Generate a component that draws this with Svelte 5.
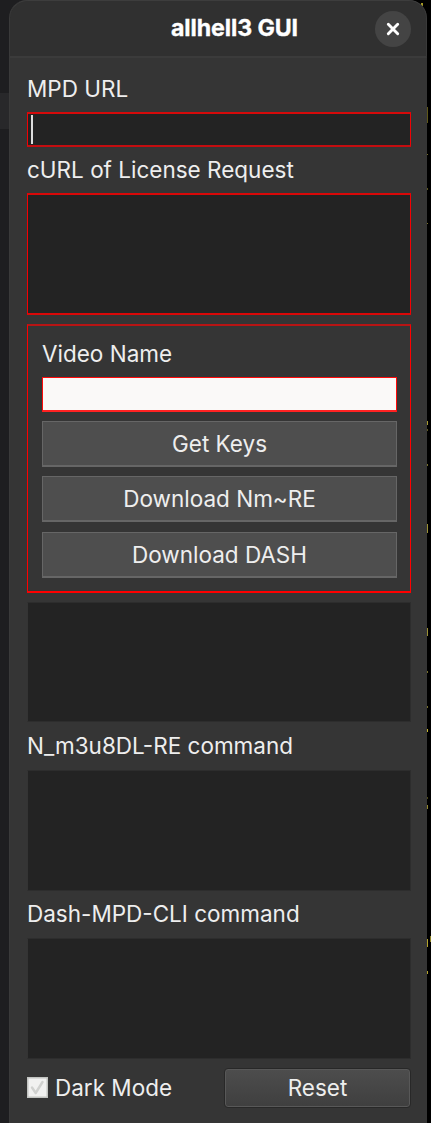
<script>
  let mpdUrl = $state('');
  const actions = ['Get Keys', 'Download Nm~RE', 'Download DASH'];
  const specks = [
    { y: 107, h: 16, w: 1, c: '#5f5719' },
    { y: 154, h: 1, w: 1, c: '#77702b' },
    { y: 188, h: 2, w: 1, c: '#5c571f' },
    { y: 223, h: 1, w: 1, c: '#77702b' },
    { y: 421, h: 4, w: 1, c: '#a89b32' },
    { y: 429, h: 2, w: 1, c: '#5c571f' },
    { y: 464, h: 2, w: 1, c: '#77702b' },
    { y: 524, h: 9, w: 1, c: '#9c9135' },
    { y: 628, h: 8, w: 1, c: '#9c9135' },
    { y: 671, h: 2, w: 1, c: '#77702b' },
    { y: 706, h: 2, w: 1, c: '#77702b' },
    { y: 729, h: 3, w: 1, c: '#c7b62c' },
    { y: 797, h: 2, w: 1, c: '#4c4819' },
    { y: 805, h: 4, w: 1, c: '#93882f' },
    { y: 939, h: 8, w: 1, c: '#b5a42c' },
    { y: 971, h: 3, w: 1, c: '#b5a42c' }
  ];
</script>

<div class="desktop">
  <div class="behind"></div>
  {#each specks as s}
    <i class="speck" style="top:{s.y}px;height:{s.h}px;width:{s.w}px;background:{s.c}"></i>
  {/each}
  <i class="speck corner"></i>
  <i class="speck edge"></i>
  <main class="window">
    <header>
      <h1>allhell3 GUI</h1>
      <button class="close" aria-label="Close">
        <svg width="14" height="14" viewBox="0 0 14 14"><path d="M2.3 2.3 11.7 11.7M11.7 2.3 2.3 11.7" stroke="#fff" stroke-width="2.9" stroke-linecap="round" /></svg>
      </button>
    </header>
    <div class="content">
      <div class="label first"><span>MPD URL</span></div>
      <div class="field invalid"><i class="caret"></i>{mpdUrl}</div>
      <div class="label second"><span>cURL of License Request</span></div>
      <div class="area invalid tall"></div>
      <section class="group">
        <div class="label name"><span>Video Name</span></div>
        <div class="field light"></div>
        <div class="actions">
          {#each actions as action}
            <button class="action"><span>{action}</span></button>
          {/each}
        </div>
      </section>
      <div class="area output"></div>
      <div class="label cmd"><span>N_m3u8DL-RE command</span></div>
      <div class="area"></div>
      <div class="label cmd"><span>Dash-MPD-CLI command</span></div>
      <div class="area"></div>
      <footer>
        <label class="check">
          <svg width="21" height="21" viewBox="0 0 21 21">
            <rect x=".75" y=".75" width="19.5" height="19.5" fill="#f1f1f0" stroke="#c2c4c1" stroke-width="1.5" />
            <path d="M5 10.5 8.7 16 15.5 5" fill="none" stroke="#d0d1cf" stroke-width="2.4" stroke-linecap="round" stroke-linejoin="round" />
          </svg>
          <span>Dark Mode</span>
        </label>
        <button class="reset"><span>Reset</span></button>
      </footer>
    </div>
  </main>
</div>

<style>
  :global(body) { background: #000; overflow: hidden; }
  * { box-sizing: border-box; }
  .desktop {
    position: relative;
    width: 431px;
    height: 1123px;
    padding-left: 9px;
    overflow: hidden;
    background: linear-gradient(90deg, #1e1e20 40px, #000 40px);
    font-family: Inter, sans-serif;
    font-size: 22.5px;
    color: #eee;
  }
  .behind { position: absolute; left: 0; top: 93px; width: 9px; height: 36px; background: #28282a; }
  .speck { position: absolute; left: 427px; z-index: 2; }
  .corner { left: 421px; top: 3px; width: 2px; height: 3px; background: #a59925; z-index: 0; }
  .edge { left: 430px; top: 936px; width: 1px; height: 6px; background: #8c8228; }
  .window {
    position: relative;
    width: 418px;
    height: 1123px;
    border-radius: 18px 18px 0 0;
    background: #353535;
    border-left: 1px solid #3a3a3a;
    overflow: hidden;
  }
  header {
    display: grid;
    grid-template-columns: 52px 1fr 53px;
    align-items: center;
    height: 58px;
    background: #303030;
    border-top: 1px solid #3d3d3d;
    border-right: 1px solid #393939;
    border-bottom: 2px solid #3b3b3b;
    border-radius: 18px 18px 0 0;
  }
  h1 {
    grid-column: 2;
    margin: -2px 0 0;
    padding-left: 34px;
    text-align: center;
    font-size: 23.2px;
    font-weight: 700;
    line-height: 28px;
    color: #fff;
    white-space: nowrap;
    letter-spacing: -0.1px;
    -webkit-text-stroke: 0.35px #fff;
  }
  button { font: inherit; color: inherit; padding: 0; }
  .close {
    display: grid;
    place-items: center;
    justify-self: start;
    width: 36px;
    height: 36px;
    border: 0;
    border-radius: 50%;
    background: #444;
    margin: 0 0 0 2px;
  }
  .content { padding: 16px 16px 0 17px; }
  .label { display: flex; align-items: center; white-space: nowrap; line-height: 28px; }
  .first { height: 38px; padding-bottom: 8px; }
  .second { height: 46px; }
  .field { height: 35px; background: #232323; padding: 2px 3px; border: 1px solid #f00; }
  .field.invalid { border-color: #f00205; border-top: 2px solid #d60a0a; border-bottom: 2px solid #c40d10; width: 384px; padding-top: 1px; }
  .caret { display: block; width: 2px; height: 29px; background: #ddd; }
  .area { width: 384px; height: 121px; background: #232323; border: 1px solid #2d2d2d; border-left-color: #343434; }
  .tall { height: 122px; border: 1px solid #f50003; border-top: 2px solid #d90808; border-bottom: 2px solid #d90808; }
  .group {
    width: 384px;
    height: 269px;
    margin-top: 9px;
    padding: 0 14px;
    border: 1px solid #f00;
    border-top: 2px solid #b81414;
    border-bottom-width: 2px;
  }
  .name { height: 51px; padding-top: 5px; }
  .light { width: 355px; background: #faf9f8; border: 1px solid #ff0a0a; border-bottom: 2px solid #f22; }
  .actions { display: grid; gap: 9.4px; padding-top: 9px; }
  .action {
    display: block;
    width: 355px;
    height: 46px;
    background: #4e4e4e;
    border: 1px solid #666;
    border-bottom-width: 2px;
    border-radius: 0;
    line-height: 43px;
    white-space: nowrap;
  }
  .output { margin-top: 9px; height: 120px; }
  .cmd { height: 47px; padding-bottom: 1px; }
  .output + .cmd { height: 48px; padding-bottom: 1px; }
  footer { display: flex; justify-content: space-between; align-items: flex-start; width: 384px; padding-top: 9px; }
  .check { display: flex; align-items: center; gap: 7px; height: 38px; white-space: nowrap; }
  .reset {
    width: 187px;
    height: 40px;
    border: 1px solid #282828;
    border-radius: 4px;
    background: linear-gradient(#4d4d4d, #3f3f3f);
    box-shadow: inset 0 0 0 1px #585858;
    line-height: 36px;
  }
</style>
